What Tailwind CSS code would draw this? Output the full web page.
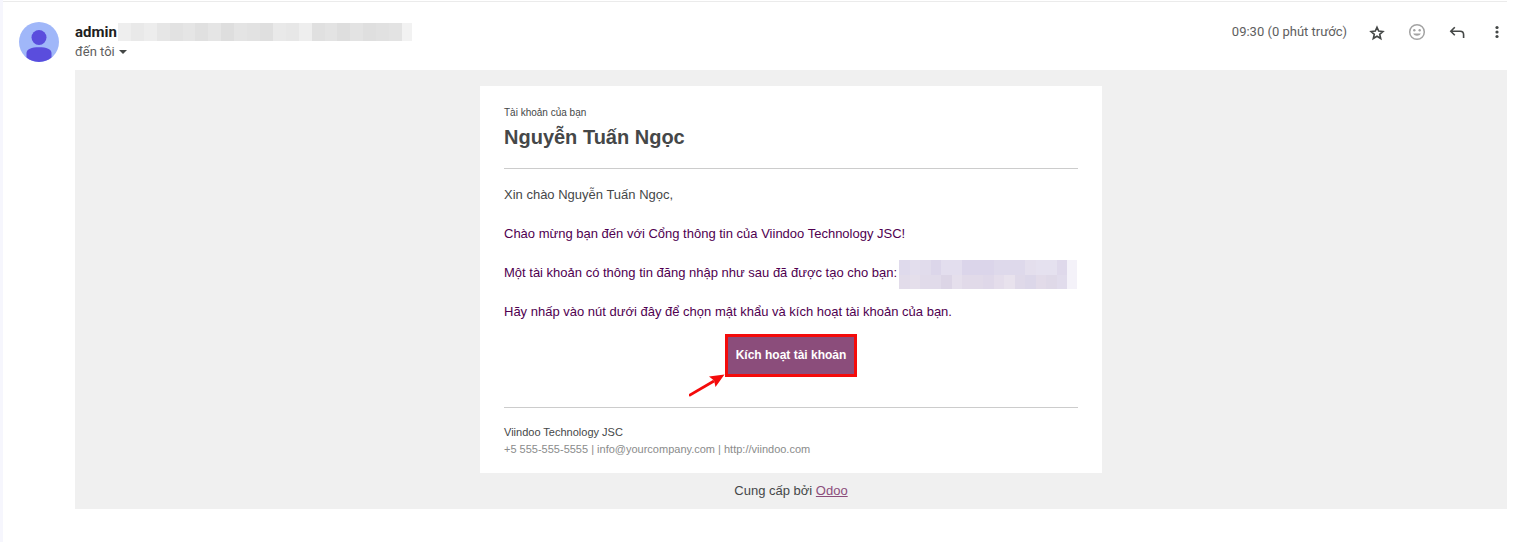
<!DOCTYPE html>
<html lang="vi">
<head>
<meta charset="utf-8">
<meta name="viewport" content="width=device-width, initial-scale=1">
<title>Nguyễn Tuấn Ngọc</title>
<script src="https://cdn.jsdelivr.net/npm/@tailwindcss/browser@4"></script>
</head>
<body class="min-h-screen bg-white border-l-3 border-[#f6f6fd] font-['Liberation_Sans',sans-serif]">
<main class="mt-px mr-[15px] border-t border-[#ebebeb]">
  <header class="flex h-[68px] items-start pl-4 font-['Roboto',sans-serif]">
    <svg class="mt-5 size-10 shrink-0" viewBox="0 0 40 40" role="img" aria-label="admin">
      <circle cx="20" cy="20" r="20" fill="#a0b7f9"/>
      <circle cx="20" cy="15.5" r="7.5" fill="#5a4ddd"/>
      <path d="M7.500 35.600V31c0-4 5-5.800 12.500-5.800S32.500 27 32.500 31v4.600A20 20 0 0 1 7.500 35.600z" fill="#5a4ddd"/>
    </svg>
    <div class="ml-4 mt-5">
      <div class="flex h-5 items-center">
        <h3 class="w-[43px] text-[15px] leading-5 font-bold text-[#1f1f1f]">admin</h3>
        <div class="flex h-[18px] w-[294px]" aria-hidden="true">
          <span class="flex-1 bg-[#eeeeee]"></span><span class="flex-1 bg-[#e9e9e9]"></span><span class="flex-1 bg-[#ededed]"></span><span class="flex-1 bg-[#e6e6e6]"></span><span class="flex-1 bg-[#e2e2e2]"></span><span class="flex-1 bg-[#e5e5e5]"></span><span class="flex-1 bg-[#e0e0e0]"></span><span class="flex-1 bg-[#e5e5e5]"></span><span class="flex-1 bg-[#dedede]"></span><span class="flex-1 bg-[#e4e4e4]"></span><span class="flex-1 bg-[#e2e2e2]"></span><span class="flex-1 bg-[#dfdfdf]"></span><span class="flex-1 bg-[#e9e9e9]"></span><span class="flex-1 bg-[#e7e7e7]"></span><span class="flex-1 bg-[#eeeeee]"></span><span class="flex-1 bg-[#e0e0e0]"></span><span class="flex-1 bg-[#e3e3e3]"></span><span class="flex-1 bg-[#dedede]"></span><span class="flex-1 bg-[#e3e3e3]"></span><span class="flex-1 bg-[#dfdfdf]"></span><span class="flex-1 bg-[#e1e1e1]"></span><span class="flex-1 bg-[#e3e3e3]"></span><span class="w-[10px] bg-[#f2f2f2]"></span>
        </div>
      </div>
      <button type="button" class="flex h-5 items-center text-[13px] leading-5 text-[#5e5e5e]">đến tôi
        <svg class="ml-1 h-1 w-2" viewBox="0 0 8 4" fill="#444746" aria-hidden="true"><path d="M0 0h8L4 4z"/></svg>
      </button>
    </div>
    <div class="ml-auto mt-5 flex h-5 items-center">
      <time class="mr-5 text-[13px] leading-5 text-[#5e5e5e]">09:30 (0 phút trước)</time>
      <div class="flex items-center gap-5">
        <button type="button" aria-label="Gắn dấu sao"><svg class="block size-5" viewBox="0 0 20 20" fill="none" stroke="#444746" stroke-width="1.600"><path d="M10 5.200l1.700 3.900 4.200.400-3.200 2.800 1 4.200L10 14.300 6.300 16.500l1-4.200L4.100 9.500l4.200-.400z"/></svg></button>
        <button type="button" aria-label="Thêm biểu tượng cảm xúc"><svg class="block size-5" viewBox="0 0 20 20" fill="none" stroke="#a3a3a3" stroke-width="1.500"><circle cx="10" cy="10" r="7.300"/><path d="M6.200 11.500c1.300 3 6.300 3 7.600 0z" fill="#a3a3a3" stroke="none"/><circle cx="7.300" cy="8.200" r="1.200" fill="#a3a3a3" stroke="none"/><circle cx="12.700" cy="8.200" r="1.200" fill="#a3a3a3" stroke="none"/></svg></button>
        <button type="button" aria-label="Trả lời"><svg class="block size-5" viewBox="0 0 20 20" fill="none" stroke="#444746" stroke-width="1.600"><path d="M7.800 5.300L3.800 9.300l4 4M3.800 9.300h9.400c2.100 0 3.400 1.400 3.400 3.500V16"/></svg></button>
        <button type="button" aria-label="Tùy chọn khác"><svg class="block size-5" viewBox="0 0 20 20" fill="#444746"><circle cx="10" cy="5.500" r="1.600"/><circle cx="10" cy="10" r="1.600"/><circle cx="10" cy="14.500" r="1.600"/></svg></button>
      </div>
    </div>
  </header>

  <article class="ml-[72px] bg-[#f0f0f0] pt-4 pb-[9px] text-[13px] leading-[19px] text-[#454748]">
    <section class="mx-auto max-w-[622px] bg-white px-6 pt-5 pb-[15px]">
      <p class="text-[10px] leading-[13px]">Tài khoản của bạn</p>
      <h1 class="mt-[5px] text-[20px] leading-[26px] font-bold">Nguyễn Tuấn Ngọc</h1>
      <hr class="mt-[18px] mb-4 border-[#cccccc]">
      <div class="flex flex-col gap-5 text-[#500050]">
        <p class="text-[#454748]">Xin chào Nguyễn Tuấn Ngọc,</p>
        <p>Chào mừng bạn đến với Cổng thông tin của Viindoo Technology JSC!</p>
        <div class="flex items-start justify-between">
          <p>Một tài khoản có thông tin đăng nhập như sau đã được tạo cho bạn:</p>
          <div class="mr-px -mt-[3px] -mb-[7px] flex h-[29px] w-[178px]" aria-hidden="true">
            <div class="grid flex-1 grid-cols-16 grid-rows-2">
              <span class="bg-[#dfdaec]"></span><span class="bg-[#e3deed]"></span><span class="bg-[#e1dcec]"></span><span class="bg-[#dcd6ea]"></span><span class="col-span-2 bg-[#e3deee]"></span><span class="col-span-3 bg-[#dbd5ea]"></span><span class="col-span-3 bg-[#ded9eb]"></span><span class="bg-[#e4dfed]"></span><span class="col-span-2 bg-[#e5e1ef]"></span><span class="bg-[#dfd9eb]"></span>
              <span class="bg-[#e2dcea]"></span><span class="bg-[#e5dfeb]"></span><span class="col-span-2 bg-[#e1dbea]"></span><span class="bg-[#dcd5e6]"></span><span class="bg-[#e5dfec]"></span><span class="col-span-2 bg-[#e1dae9]"></span><span class="bg-[#dfd8e9]"></span><span class="bg-[#e4ddeb]"></span><span class="bg-[#e8e2ed]"></span><span class="bg-[#dfd9e9]"></span><span class="bg-[#dcd7e9]"></span><span class="bg-[#e2dbe9]"></span><span class="bg-[#dfd9e8]"></span><span class="bg-[#e1dcec]"></span>
            </div>
            <span class="w-[10px] bg-[#f4f2f9]"></span>
          </div>
        </div>
        <p>Hãy nhấp vào nút dưới đây để chọn mật khẩu và kích hoạt tài khoản của bạn.</p>
      </div>
      <div class="mt-[13px] flex justify-center">
        <div class="relative">
          <button type="button" class="block h-[43px] border-3 border-[#f40b0b] bg-[#8b4d7b] px-2 text-[12px] font-bold text-white">Kích hoạt tài khoản</button>
          <svg class="absolute top-[39px] right-full h-6 w-9" viewBox="0 0 36 24" aria-hidden="true"><path d="M0 22.500L25 8" stroke="#f40b0b" stroke-width="2.800"/><path d="M35.500 1.500L20 3.500L25 7.500L26.500 14z" fill="#f40b0b"/></svg>
        </div>
      </div>
      <hr class="mt-[30px] mb-4 border-[#cccccc]">
      <footer class="text-[11px] leading-[17px]">
        <p>Viindoo Technology JSC</p>
        <p class="text-[#8a8b8b]">+5 555-555-5555 | info@yourcompany.com | http://viindoo.com</p>
      </footer>
    </section>
    <p class="mt-2 text-center">Cung cấp bởi <a href="#" class="text-[#8b4d7b] underline">Odoo</a></p>
  </article>
</main>
</body>
</html>
